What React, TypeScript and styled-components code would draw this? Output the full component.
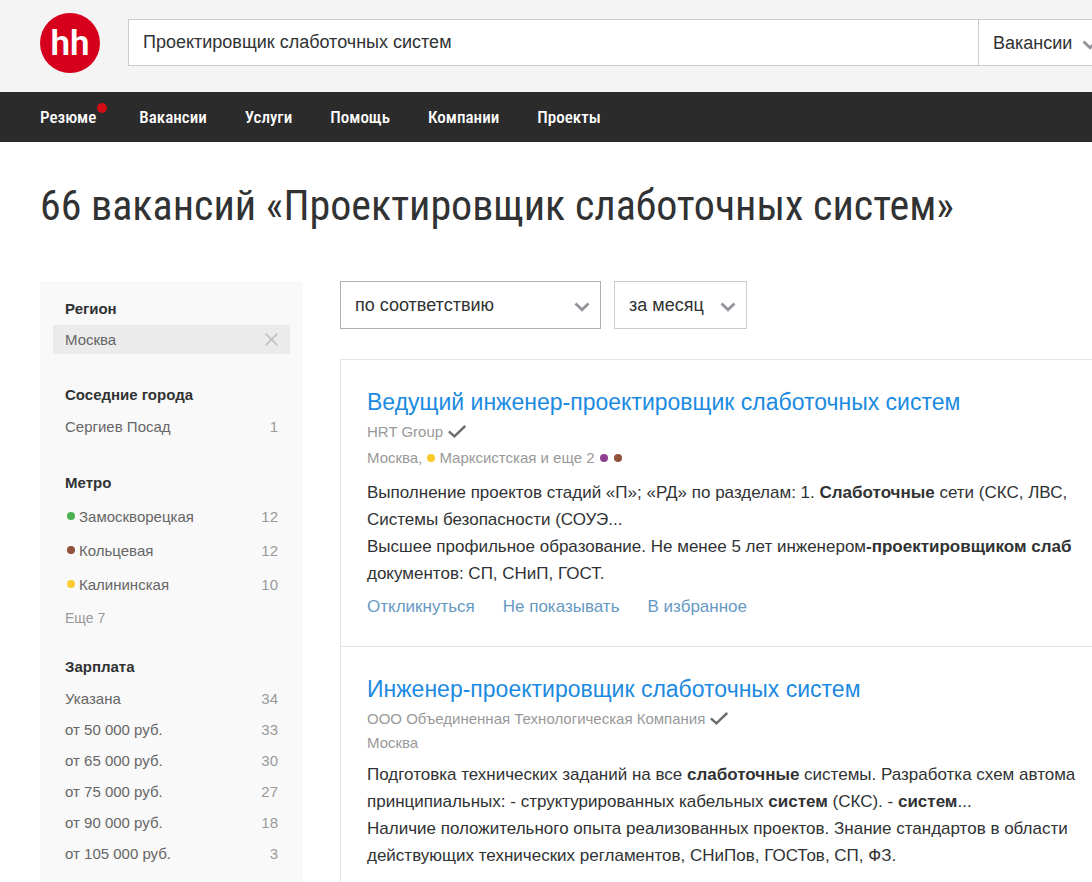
import React from "react";
import styled, { createGlobalStyle } from "styled-components";

const GlobalStyle = createGlobalStyle`
  * { box-sizing: border-box; }
  body {
    margin: 0;
    background: #fff;
    color: #303233;
    font-family: "Liberation Sans", Arial, sans-serif;
    font-size: 17px;
  }
  a { color: inherit; text-decoration: none; }
  button, input, select { font: inherit; color: inherit; }
`;

const narrow = `"Roboto Condensed", Roboto, sans-serif`;

const Page = styled.div`
  overflow: hidden;
  min-height: 100vh;
`;

const Header = styled.header`
  display: flex;
  align-items: flex-start;
  gap: 28px;
  height: 92px;
  padding: 13px 0 0 40px;
  background: #f4f4f4;
`;

const Logo = styled.a`
  flex: none;
  width: 60px;
  height: 60px;
  border-radius: 50%;
  background: #d6001c;
  color: #fff;
  font-family: Roboto, sans-serif;
  font-size: 35px;
  font-weight: 600;
  line-height: 62px;
  text-align: center;
`;

const SearchForm = styled.form`
  flex: 1;
  display: flex;
  height: 47px;
  margin: 6px -24px 0 0;
  border: 1px solid #c8ccd0;
  background: #fff;
  font-size: 18px;
`;

const SearchInput = styled.input`
  flex: 1;
  min-width: 0;
  padding: 0 14px;
  border: 0;
  background: none;
  outline: none;
`;

const SelectBox = styled.div<{ $width: number; $tone?: string; $iconRight: number; $joined?: boolean }>`
  position: relative;
  flex: none;
  width: ${(p) => p.$width}px;
  border: ${(p) => (p.$joined ? "0" : `1px solid ${p.$tone}`)};
  ${(p) => p.$joined && "border-left: 1px solid #c8ccd0;"}
  background: #fff;
  svg {
    position: absolute;
    right: ${(p) => p.$iconRight}px;
    top: 50%;
    margin-top: -3px;
    pointer-events: none;
  }
`;

const Select = styled.select`
  width: 100%;
  height: 100%;
  padding: 0 14px;
  border: 0;
  background: none;
  appearance: none;
  outline: none;
`;

const Nav = styled.nav`
  display: flex;
  align-items: center;
  gap: 38px;
  height: 50px;
  padding-left: 40px;
  background: #2b2b2b;
  color: #fff;
  font-family: ${narrow};
  font-size: 17px;
  font-weight: 500;
`;

const NavLink = styled.a<{ $marked?: boolean }>`
  position: relative;
  ${(p) =>
    p.$marked &&
    `
    padding-right: 5px;
    &::after {
      content: "";
      position: absolute;
      top: -4px;
      right: -6px;
      width: 10px;
      height: 10px;
      border-radius: 50%;
      background: #d30d15;
    }
  `}
`;

const Title = styled.h1`
  margin: 0;
  padding: 39px 40px 50px;
  color: #303233;
  font-family: ${narrow};
  font-size: 42px;
  font-weight: 400;
  line-height: 50px;
  white-space: nowrap;
`;

const Content = styled.div`
  display: grid;
  grid-template-columns: 263px minmax(0, 1fr);
  gap: 37px;
  padding-left: 40px;
`;

const Sidebar = styled.aside`
  padding: 12px 13px;
  background: #f9f9f9;
  color: #666;
  font-size: 15px;
`;

const Group = styled.section<{ $gap: number }>`
  margin-bottom: ${(p) => p.$gap}px;
`;

const GroupTitle = styled.h2`
  margin: 0;
  padding-left: 12px;
  color: #303233;
  font-size: 15px;
  font-weight: 700;
  line-height: 32px;
`;

const List = styled.ul`
  margin: 0;
  padding: 0;
  list-style: none;
`;

const FilterRow = styled.li<{ $height: number; $active?: boolean }>`
  display: flex;
  align-items: center;
  height: ${(p) => p.$height}px;
  padding: 0 12px;
  background: ${(p) => (p.$active ? "#ebebeb" : "none")};
`;

const FilterLink = styled.a`
  flex: 1;
  display: flex;
  align-items: center;
`;

const Count = styled.span`
  color: #999;
`;

const MoreButton = styled.button`
  height: 34px;
  padding: 0 12px;
  border: 0;
  background: none;
  color: #999;
  font-size: 14px;
`;

const ClearButton = styled.button`
  display: flex;
  padding: 0;
  border: 0;
  background: none;
`;

const Dot = styled.i<{ $color: string }>`
  display: inline-block;
  flex: none;
  width: 8px;
  height: 8px;
  margin: 0 4px 0 2px;
  border-radius: 50%;
  background: ${(p) => p.$color};
`;

const Toolbar = styled.div`
  display: flex;
  gap: 13px;
  height: 48px;
  margin-bottom: 30px;
  font-size: 18px;
`;

const Results = styled.div`
  border: 1px solid #e2e4e6;
  border-width: 1px 0 0 1px;
`;

const Card = styled.article`
  padding: 26px 0 25px 26px;
  white-space: nowrap;
  & + & { border-top: 1px solid #e2e4e6; }
`;

const CardTitle = styled.h3`
  margin: 0;
  color: #1b8ae0;
  font-size: 23px;
  font-weight: 400;
  line-height: 32px;
`;

const Company = styled.div`
  display: flex;
  align-items: center;
  gap: 5px;
  height: 26px;
  color: #999;
  font-size: 15px;
`;

const Place = styled.div<{ $metro?: boolean }>`
  display: flex;
  align-items: center;
  height: ${(p) => (p.$metro ? 27 : 22)}px;
  color: #999;
  font-size: 15px;
`;

const PlaceCity = styled.span`
  margin-right: 3px;
`;

const Description = styled.p`
  margin: 8px 0 0;
  line-height: 27px;
`;

const Actions = styled.div`
  display: flex;
  gap: 28px;
  margin-top: 6px;
`;

const Action = styled.button`
  height: 28px;
  padding: 0;
  border: 0;
  background: none;
  color: #6699c2;
`;

const Chevron = () => (
  <svg width="16" height="10" viewBox="0 0 16 10" fill="none" aria-hidden="true">
    <path d="M1.500 1.500l6.500 6.200 6.500-6.200" stroke="#919498" strokeWidth="2.800" />
  </svg>
);

const Check = () => (
  <svg width="18" height="13" viewBox="0 0 18 13" fill="none" aria-hidden="true">
    <path d="M0.900 6.300l5.500 5L17.200 1" stroke="#6e6e6e" strokeWidth="2.500" />
  </svg>
);

const Cross = () => (
  <svg width="13" height="13" viewBox="0 0 13 13" fill="none" aria-hidden="true">
    <path d="M0.700 0.700l11.600 11.600M12.300 0.700L0.700 12.300" stroke="#c4c4c4" strokeWidth="1.900" />
  </svg>
);

const nav = ["Вакансии", "Услуги", "Помощь", "Компании", "Проекты"];

const metro = [
  { name: "Замоскворецкая", color: "#4bb04f", count: 12 },
  { name: "Кольцевая", color: "#91513b", count: 12 },
  { name: "Калининская", color: "#fdca2e", count: 10 },
];

const salary = [
  { name: "Указана", count: 34 },
  { name: "от 50 000 руб.", count: 33 },
  { name: "от 65 000 руб.", count: 30 },
  { name: "от 75 000 руб.", count: 27 },
  { name: "от 90 000 руб.", count: 18 },
  { name: "от 105 000 руб.", count: 3 },
];

export default function App() {
  return (
    <Page>
      <GlobalStyle />
      <Header>
        <Logo href="#">hh</Logo>
        <SearchForm onSubmit={(e) => e.preventDefault()}>
          <SearchInput aria-label="Поиск" defaultValue="Проектировщик слаботочных систем" />
          <SelectBox $width={137} $iconRight={17} $joined>
            <Select aria-label="Раздел">
              <option>Вакансии</option>
            </Select>
            <Chevron />
          </SelectBox>
        </SearchForm>
      </Header>
      <Nav>
        <NavLink href="#" $marked>Резюме</NavLink>
        {nav.map((item) => (
          <NavLink href="#" key={item}>{item}</NavLink>
        ))}
      </Nav>
      <Title>66 вакансий «Проектировщик слаботочных систем»</Title>
      <Content>
        <Sidebar>
          <Group $gap={25}>
            <GroupTitle>Регион</GroupTitle>
            <List>
              <FilterRow $height={29} $active>
                <FilterLink href="#">Москва</FilterLink>
                <ClearButton aria-label="Сбросить"><Cross /></ClearButton>
              </FilterRow>
            </List>
          </Group>
          <Group $gap={25}>
            <GroupTitle>Соседние города</GroupTitle>
            <List>
              <FilterRow $height={31}>
                <FilterLink href="#">Сергиев Посад</FilterLink>
                <Count>1</Count>
              </FilterRow>
            </List>
          </Group>
          <Group $gap={16}>
            <GroupTitle>Метро</GroupTitle>
            <List>
              {metro.map((line) => (
                <FilterRow $height={34} key={line.name}>
                  <FilterLink href="#"><Dot $color={line.color} />{line.name}</FilterLink>
                  <Count>{line.count}</Count>
                </FilterRow>
              ))}
            </List>
            <MoreButton>Еще 7</MoreButton>
          </Group>
          <Group $gap={0}>
            <GroupTitle>Зарплата</GroupTitle>
            <List>
              {salary.map((item) => (
                <FilterRow $height={31} key={item.name}>
                  <FilterLink href="#">{item.name}</FilterLink>
                  <Count>{item.count}</Count>
                </FilterRow>
              ))}
            </List>
          </Group>
        </Sidebar>
        <main>
          <Toolbar>
            <SelectBox $width={261} $iconRight={10} $tone="#a9b3b6">
              <Select aria-label="Сортировка"><option>по соответствию</option></Select>
              <Chevron />
            </SelectBox>
            <SelectBox $width={133} $iconRight={10} $tone="#c8ccd0">
              <Select aria-label="Период"><option>за месяц</option></Select>
              <Chevron />
            </SelectBox>
          </Toolbar>
          <Results>
            <Card>
              <CardTitle><a href="#">Ведущий инженер-проектировщик слаботочных систем</a></CardTitle>
              <Company><a href="#">HRT Group</a><Check /></Company>
              <Place $metro>
                <PlaceCity>Москва,</PlaceCity>
                <Dot $color="#fdca2e" />
                <PlaceCity>Марксистская и еще 2</PlaceCity>
                <Dot $color="#8f3f8f" />
                <Dot $color="#91513b" />
              </Place>
              <Description>
                Выполнение проектов стадий «П»; «РД» по разделам: 1. <b>Слаботочные</b> сети (СКС, ЛВС,<br />
                Системы безопасности (СОУЭ...<br />
                Высшее профильное образование. Не менее 5 лет инженером<b>-проектировщиком слаб</b><br />
                документов: СП, СНиП, ГОСТ.
              </Description>
              <Actions>
                <Action>Откликнуться</Action>
                <Action>Не показывать</Action>
                <Action>В избранное</Action>
              </Actions>
            </Card>
            <Card>
              <CardTitle><a href="#">Инженер-проектировщик слаботочных систем</a></CardTitle>
              <Company><a href="#">ООО Объединенная Технологическая Компания</a><Check /></Company>
              <Place>Москва</Place>
              <Description>
                Подготовка технических заданий на все <b>слаботочные</b> системы. Разработка схем автома<br />
                принципиальных: - структурированных кабельных <b>систем</b> (СКС). - <b>систем</b>...<br />
                Наличие положительного опыта реализованных проектов. Знание стандартов в области<br />
                действующих технических регламентов, СНиПов, ГОСТов, СП, ФЗ.
              </Description>
            </Card>
          </Results>
        </main>
      </Content>
    </Page>
  );
}
